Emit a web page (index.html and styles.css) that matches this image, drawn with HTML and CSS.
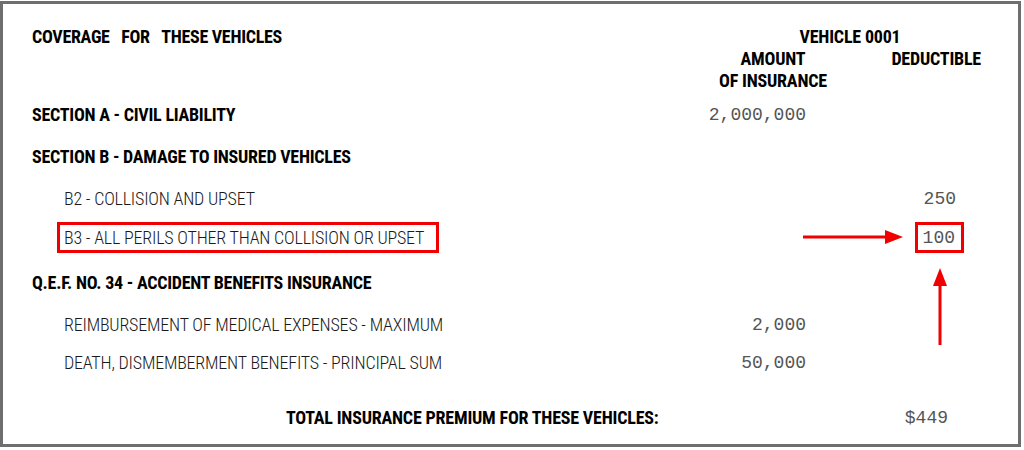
FILE: index.html
```html
<!DOCTYPE html>
<html>
<head>
<meta charset="utf-8">
<link rel="stylesheet" href="styles.css">
</head>
<body>
<div class="doc">
  <div class="head">
    <div class="head-title">COVERAGE&nbsp;&nbsp;&nbsp;FOR&nbsp;&nbsp;&nbsp;THESE VEHICLES</div>
    <div class="head-cols">
      <div class="vehicle">VEHICLE 0001</div>
      <div class="head-sub">
        <div class="head-amount">AMOUNT<br>OF INSURANCE</div>
        <div class="head-ded">DEDUCTIBLE</div>
      </div>
    </div>
  </div>

  <div class="row row-a">
    <div class="label section">SECTION A - CIVIL LIABILITY</div>
    <div class="amount num">2,000,000</div>
    <div class="ded num"></div>
  </div>
  <div class="row">
    <div class="label section">SECTION B - DAMAGE TO INSURED VEHICLES</div>
    <div class="amount num"></div>
    <div class="ded num"></div>
  </div>
  <div class="row row-b2">
    <div class="label item">B2 - COLLISION AND UPSET</div>
    <div class="amount num"></div>
    <div class="ded num">250</div>
  </div>
  <div class="row row-b3">
    <div class="label item item-boxed"><span class="mark mark-label">B3 - ALL PERILS OTHER THAN COLLISION OR UPSET</span></div>
    <div class="amount num"></div>
    <div class="ded num ded-boxed"><span class="mark mark-num">100</span></div>
  </div>
  <div class="row">
    <div class="label section">Q.E.F. NO. 34 - ACCIDENT BENEFITS INSURANCE</div>
    <div class="amount num"></div>
    <div class="ded num"></div>
  </div>
  <div class="row row-reimb">
    <div class="label item">REIMBURSEMENT OF MEDICAL EXPENSES - MAXIMUM</div>
    <div class="amount num">2,000</div>
    <div class="ded num"></div>
  </div>
  <div class="row">
    <div class="label item">DEATH, DISMEMBERMENT BENEFITS - PRINCIPAL SUM</div>
    <div class="amount num">50,000</div>
    <div class="ded num"></div>
  </div>
  <div class="row row-total">
    <div class="label total">TOTAL INSURANCE PREMIUM FOR THESE VEHICLES:</div>
    <div class="amount num"></div>
    <div class="ded num ded-total">$449</div>
  </div>
</div>

<svg class="arrows" width="1024" height="450" viewBox="0 0 1024 450" aria-hidden="true">
  <line x1="803" y1="237" x2="888" y2="237" stroke="#f00000" stroke-width="3"/>
  <polygon points="885,230 903,237 885,244" fill="#f00000"/>
  <line x1="940" y1="345" x2="940" y2="283" stroke="#f00000" stroke-width="3"/>
  <polygon points="933,286 940,268 947,286" fill="#f00000"/>
</svg>
</body>
</html>
```

FILE: styles.css
```css
html, body {
  margin: 0;
  padding: 0;
  background: #ffffff;
}

body {
  position: relative;
  width: 1024px;
  height: 450px;
  overflow: hidden;
  font-family: "Roboto Condensed", Roboto, "DejaVu Sans Condensed", "Liberation Sans Narrow", sans-serif;
  font-stretch: 75%;
  font-size: 18px;
  line-height: 22px;
  color: #111;
}

.doc {
  box-sizing: border-box;
  width: 1021px;
  height: 446px;
  margin-top: 1px;
  border: 3px solid #6e6e6e;
  padding: 22px 33px 0 29px;
  background: #fff;
}

.head {
  display: flex;
  align-items: flex-start;
}

.head-title {
  flex: 1;
  font-weight: 700;
  color: #000;
  letter-spacing: -0.3px;
}

.head-cols {
  width: 285px;
  font-weight: 700;
  color: #000;
  letter-spacing: -0.2px;
}

.vehicle {
  text-align: center;
  padding-left: 15px;
}

.head-sub {
  display: flex;
}

.head-amount {
  width: 146px;
  text-align: center;
}

.head-ded {
  flex: 1;
  text-align: right;
  padding-right: 4px;
}

.row {
  display: grid;
  grid-template-columns: 1fr 129px 179px;
  align-items: center;
  padding: 10px 0;
}

.row-a {
  margin-top: 2px;
}

.row-b2 {
  padding-bottom: 7px;
}

.row-b3 {
  padding: 5px 0 9px;
}

.row-reimb {
  padding-bottom: 6px;
}

.row-total {
  padding-top: 23px;
}

.label {
  white-space: nowrap;
}

.section {
  font-weight: 700;
  color: #000;
  letter-spacing: -0.25px;
}

.item {
  font-weight: 300;
  color: #1a1a1a;
  padding-left: 32px;
  letter-spacing: -0.2px;
}

.item-boxed {
  display: flex;
  align-items: center;
  padding-left: 25px;
}

.total {
  font-weight: 700;
  color: #000;
  padding-left: 254px;
  letter-spacing: -0.2px;
}

.num {
  font-family: "Liberation Mono", "Courier New", monospace;
  font-stretch: normal;
  font-size: 18px;
  color: #555;
}

.amount {
  text-align: right;
}

.ded {
  text-align: right;
  padding-right: 29px;
}

.ded-boxed {
  display: flex;
  justify-content: flex-end;
  align-items: center;
  padding-right: 21px;
}

.ded-total {
  padding-right: 37px;
}

.mark {
  display: block;
  border: 3px solid #f00000;
  line-height: 22px;
  padding-top: 2px;
  padding-bottom: 1px;
}

.mark-label {
  padding-left: 4px;
  padding-right: 12px;
}

.mark-num {
  padding-left: 5px;
  padding-right: 6px;
}

.arrows {
  position: absolute;
  left: 0;
  top: 0;
  pointer-events: none;
}
```
